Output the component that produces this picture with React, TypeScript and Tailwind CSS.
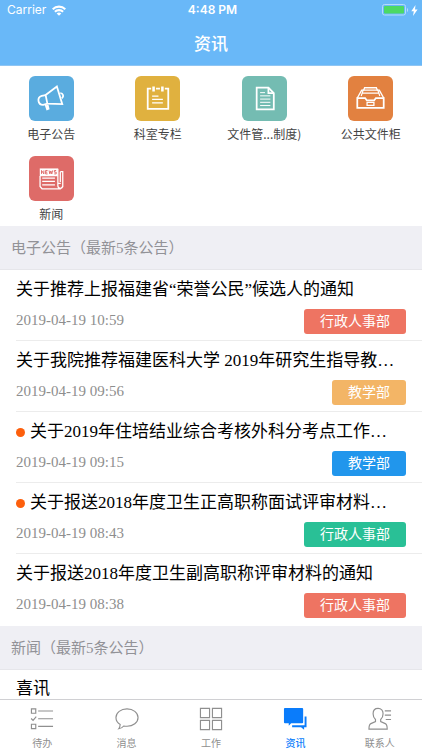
import type { ReactNode } from "react"
import clsx from "clsx"

type Shortcut = {
  label: string
  color: string
  icon: ReactNode
}

type Notice = {
  title: string
  date: string
  dept: string
  color: string
  unread?: boolean
}

type Tab = {
  label: string
  icon: ReactNode
  active?: boolean
}

const shortcuts: Shortcut[] = [
  {
    label: "电子公告",
    color: "bg-[#5aacdf]",
    icon: (
      <>
        <path d="M17 19.5 28.500 10.800l5.500 18L18.800 28.200z" />
        <path d="M17 19.500l-4 .8a4.700 4.700 0 0 0 1.500 9.200l4.300-1.300M32 17.500a2.800 2.800 0 0 1 1.500 5.200" />
        <path d="M17 29.500l1.500 4.500 1.500-.6-1-4" />
      </>
    ),
  },
  {
    label: "科室专栏",
    color: "bg-[#e0b13f]",
    icon: (
      <>
        <path d="M16.500 13H13v20.500h21V13H30.500M21.500 13h4" />
        <path d="M19 10.800v5M28 10.800v5" strokeWidth="2.600" />
        <path d="M17.500 20.500h6.500M17.500 24h11M17.500 27.500h11" strokeWidth="1.300" />
      </>
    ),
  },
  {
    label: "文件管...制度)",
    color: "bg-[#74bcb2]",
    icon: (
      <>
        <path d="M15 12h12l5.500 5.500V34H15z" />
        <path d="M27 12v5.500h5.500" />
        <path d="M18.500 17h5M18.500 20.300h10.500M18.500 23.600h10.500M18.500 26.900h10.500M18.500 30.200h10.500" strokeWidth="1" />
      </>
    ),
  },
  {
    label: "公共文件柜",
    color: "bg-[#e28140]",
    icon: (
      <>
        <path d="M9.500 22.500h8l1.800 2.500h7.400l1.800-2.500h8v10h-27z" />
        <path d="M9.500 22.500l4.500-8h2M36.500 22.500l-4.500-8h-2M16 14.500l1-2.500h12l1 2.500" strokeWidth="1.400" />
        <path d="M13.500 20.500l2-6h15l2 6M15 17.500h16" strokeWidth="1.200" />
        <path d="M19.500 27h7v3h-7z" strokeWidth="1.300" />
      </>
    ),
  },
  {
    label: "新闻",
    color: "bg-[#de6b68]",
    icon: (
      <>
        <path d="M11 12.700h18.500v8H11z" fill="currentColor" stroke="none" />
        <path
          d="M12.800 18.300v-3.500l2.400 3.500v-3.500M19 14.800h-2v3.500h2M17 16.500h1.700M20.500 14.800l.8 3.500 1-3 1 3 .8-3.500M27.800 14.800h-1.900v1.700h1.900v1.800h-2"
          stroke="#de6b68"
          strokeWidth="1"
        />
        <path
          d="M11.300 20.500v10.700l2 2.300h18.700l2.500-2V16h-2.500M29.500 13v17.500M29.500 30.500a2.500 2.500 0 0 0 5 0M32 16v10.500M29.500 28h3"
          strokeWidth="1.300"
        />
        <path d="M13.500 22.500h13M13.500 26h13M13.500 29.500h13" strokeWidth="1.300" />
      </>
    ),
  },
]

const notices: Notice[] = [
  {
    title: "关于推荐上报福建省“荣誉公民”候选人的通知",
    date: "2019-04-19 10:59",
    dept: "行政人事部",
    color: "bg-[#ee7462]",
  },
  {
    title: "关于我院推荐福建医科大学 2019年研究生指导教…",
    date: "2019-04-19 09:56",
    dept: "教学部",
    color: "bg-[#f3b566]",
  },
  {
    title: "关于2019年住培结业综合考核外科分考点工作…",
    date: "2019-04-19 09:15",
    dept: "教学部",
    color: "bg-[#2196ec]",
    unread: true,
  },
  {
    title: "关于报送2018年度卫生正高职称面试评审材料…",
    date: "2019-04-19 08:43",
    dept: "行政人事部",
    color: "bg-[#29c096]",
    unread: true,
  },
  {
    title: "关于报送2018年度卫生副高职称评审材料的通知",
    date: "2019-04-19 08:38",
    dept: "行政人事部",
    color: "bg-[#ee7462]",
  },
]

const tabs: Tab[] = [
  {
    label: "待办",
    icon: (
      <>
        <path d="M1.500 2h4.500v4.500H1.500zM1.500 18h4.500v4.500H1.500z" />
        <path d="M1.200 12l2 2 3.300-4M8.500 4.200h15.500M8.500 12.200h15.500M8.500 20.200h15.500" />
      </>
    ),
  },
  {
    label: "消息",
    icon: (
      <path d="M12.500 2C6.100 2 1 5.800 1 11c0 3 1.700 5.600 4.400 7.300-.1 1.700-.6 3.300-1.500 4.400 2.100-.3 4-1.400 5.200-2.900 1.100.2 2.200.3 3.400.3C18.900 20.100 24 16.200 24 11S18.900 2 12.500 2z" />
    ),
  },
  {
    label: "工作",
    icon: <path d="M1.500 1.500H11V11H1.500zM14 1.500h9.500V11H14zM1.500 14H11v9.500H1.500zM14 14h9.500v9.500H14z" />,
  },
  {
    label: "资讯",
    active: true,
    icon: (
      <>
        <path
          d="M2 1h18a1 1 0 0 1 1 1v14a1 1 0 0 1-1 1H8.500L6 19.500V17H2a1 1 0 0 1-1-1V2a1 1 0 0 1 1-1z"
          fill="currentColor"
          stroke="none"
        />
        <path d="M22.500 10H24.500V21H22v2.700L18.800 21H9.500V19H22.500z" fill="currentColor" stroke="none" />
      </>
    ),
  },
  {
    label: "联系人",
    icon: (
      <>
        <path d="M10.500 1.500c-3.300 0-5.200 2.200-5.200 5.500 0 2.600 1 4.700 2.500 6v2.200L3 17.300c-1.500.7-2 2-2 5.700h19c0-3.700-.5-5-2-5.700l-4.800-2.100V13c1.500-1.300 2.500-3.400 2.500-6 0-3.300-1.900-5.500-5.200-5.500z" />
        <path d="M17.500 4h6.500M17.500 8.500h6.500M18.500 13h5.500" />
      </>
    ),
  },
]

function StatusBar() {
  return (
    <div className="grid h-5 grid-cols-3 items-center pr-1 pl-[7px] font-['Inter','Liberation_Sans',sans-serif] text-xs leading-5">
      <div className="flex items-center gap-1.5">
        <span>Carrier</span>
        <svg viewBox="0 0 14 11" className="h-[11px] w-3.5" fill="none" stroke="currentColor" strokeWidth="2.100">
          <path d="M.7 4.200a9 9 0 0 1 12.600 0M2.900 6.800a5.900 5.900 0 0 1 8.200 0" />
          <path d="M7 10.800 4.700 8.500a3.300 3.300 0 0 1 4.600 0z" fill="currentColor" stroke="none" />
        </svg>
      </div>
      <span className="text-center font-semibold">4:48 PM</span>
      <div className="flex items-center justify-end gap-0.5">
        <svg viewBox="0 0 27 12" className="h-3 w-[27px]">
          <rect x=".5" y=".5" width="23" height="10.500" rx="2" fill="none" stroke="#b5dcfb" />
          <rect x="2" y="2" width="20" height="7.500" rx="1" fill="#4cd964" />
          <path d="M25 4v4c1.500-.7 1.500-3.300 0-4z" fill="#b5dcfb" />
        </svg>
        <svg viewBox="0 0 7 11" className="h-[11px] w-[7px]" fill="currentColor">
          <path d="M4.500 0 .3 6.200h2.500L2 11l4.600-6.500H4z" />
        </svg>
      </div>
    </div>
  )
}

function SectionTitle({ children }: { children: ReactNode }) {
  return (
    <h2 className="border-b border-[#e6e6ea] bg-[#efeff4] px-[11px] pt-[11px] pb-[9px] text-[15px] leading-[23px] text-[#929297]">
      {children}
    </h2>
  )
}

function NoticeRow({ notice }: { notice: Notice }) {
  return (
    <li className="ml-4 border-b border-[#ececec] pt-2 pr-4 pb-1.5 last:border-transparent">
      <a href="#" className="block">
        <h3 className="flex items-center text-[17px] leading-6 whitespace-nowrap text-black">
          {notice.unread && <span className="mr-[5px] size-[9px] shrink-0 rounded-full bg-[#fd5f0c]" />}
          {notice.title}
        </h3>
        <div className="mt-[7px] flex items-start justify-between">
          <time className="text-[15px] leading-[23px] text-[#8e8e8e]">{notice.date}</time>
          <span className={clsx("rounded-[3px] px-4 text-sm leading-[25px] text-white", notice.color)}>
            {notice.dept}
          </span>
        </div>
      </a>
    </li>
  )
}

export default function App() {
  return (
    <div className="flex h-screen flex-col bg-white font-['Liberation_Serif','Noto_Sans_CJK_SC',serif]">
      <header className="border-b border-[#8fc5f3] bg-[#69b8f8] text-white">
        <StatusBar />
        <h1 className="pt-1 text-center text-[17px] leading-[41px] font-medium">资讯</h1>
      </header>

      <main className="min-h-0 flex-1 overflow-x-hidden overflow-y-auto [scrollbar-width:none]">
        <nav className="-mx-0.5 grid grid-cols-4 gap-y-3.5 pt-2.5 pb-1">
          {shortcuts.map((item) => (
            <a key={item.label} href="#" className="flex flex-col items-center gap-[5px]">
              <span className={clsx("size-[45px] rounded-md text-white", item.color)}>
                <svg viewBox="0 0 46 46" className="size-full" fill="none" stroke="currentColor" strokeWidth="1.800">
                  {item.icon}
                </svg>
              </span>
              <span className="font-['Noto_Sans_CJK_SC',sans-serif] text-xs leading-4 text-[#444]">{item.label}</span>
            </a>
          ))}
        </nav>

        <section>
          <SectionTitle>电子公告（最新5条公告）</SectionTitle>
          <ul className="pb-px">
            {notices.map((notice) => (
              <NoticeRow key={notice.title} notice={notice} />
            ))}
          </ul>
        </section>

        <section>
          <SectionTitle>新闻（最新5条公告）</SectionTitle>
          <a href="#" className="block px-4 pt-[7px] text-[17px] leading-6 text-black">
            喜讯
          </a>
        </section>
      </main>

      <nav className="grid grid-cols-5 border-t border-[#d0d0d3] bg-white font-['Noto_Sans_CJK_SC',sans-serif]">
        {tabs.map((tab) => (
          <button
            key={tab.label}
            type="button"
            className={clsx(
              "flex flex-col items-center pt-[7px] text-[10px]",
              tab.active ? "font-medium text-[#0a7cfb]" : "text-[#8f8f8f]",
            )}
          >
            <svg viewBox="0 0 25 25" className="size-6" fill="none" stroke="currentColor" strokeWidth="1.200">
              {tab.icon}
            </svg>
            <span className="mt-1 leading-[15px]">{tab.label}</span>
          </button>
        ))}
      </nav>
    </div>
  )
}
